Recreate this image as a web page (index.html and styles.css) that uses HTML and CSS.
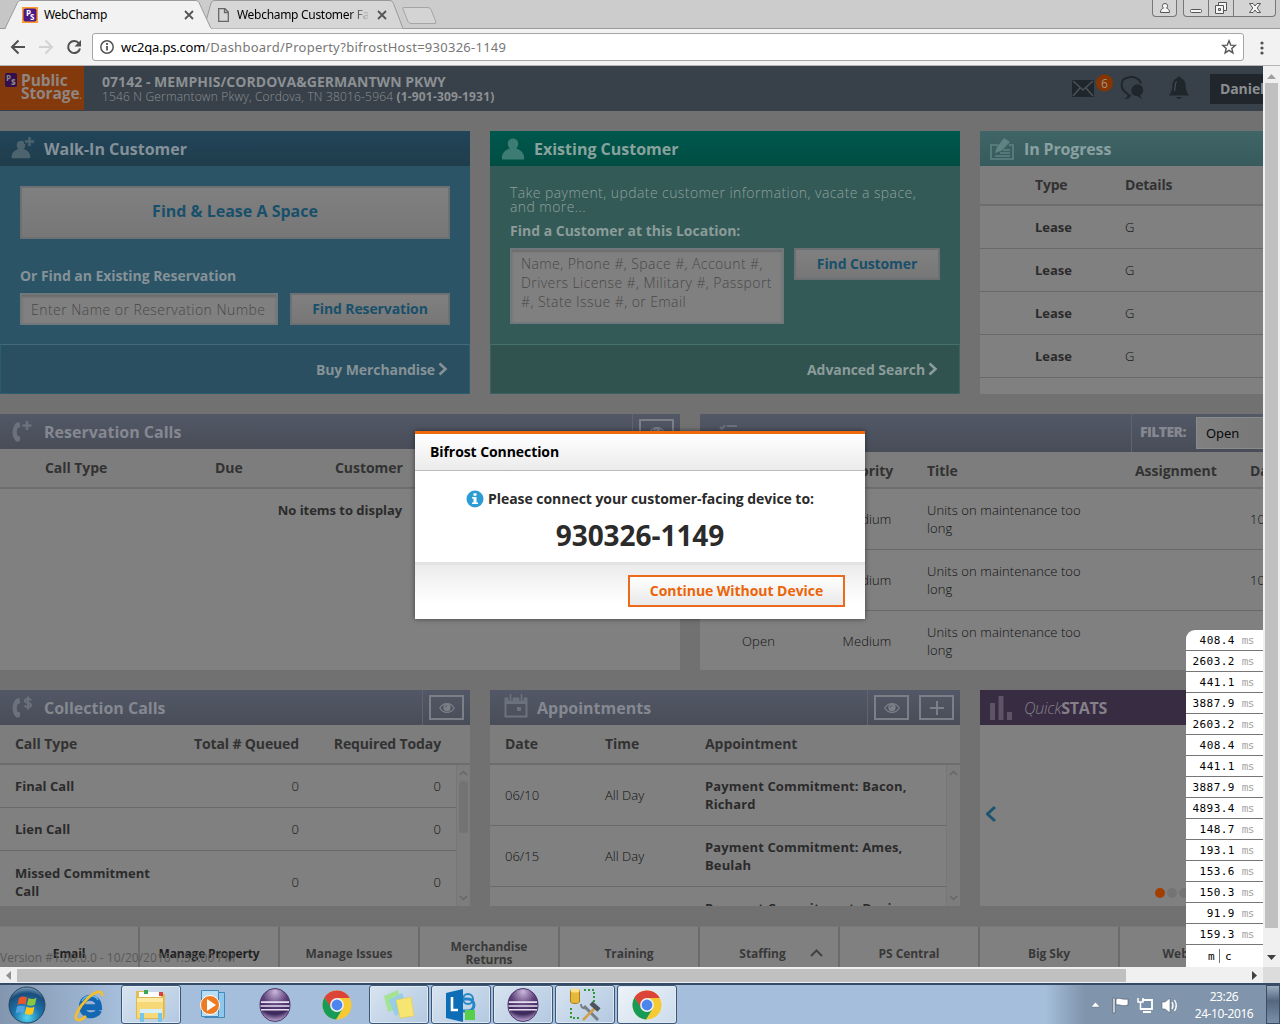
FILE: index.html
```html
<!DOCTYPE html>
<html lang="en">
<head>
<meta charset="utf-8">
<title>WebChamp</title>
<link rel="stylesheet" href="styles.css">
</head>
<body>
<svg width="0" height="0" class="defs">
  <defs>
    <symbol id="person" viewBox="0 0 24 24"><path d="M12 1.500c3.400 0 5.200 2.400 5.200 5.200 0 2-.8 3.700-2 4.800 4.200 1.300 8 4.500 8 9.500 0 1-.6 1.500-1.500 1.500H2.300C1.400 22.500.8 22 .8 21c0-5 3.800-8.200 8-9.500-1.200-1.100-2-2.800-2-4.800 0-2.800 1.800-5.200 5.200-5.200z"/></symbol>
    <symbol id="eye" viewBox="0 0 16 12"><path fill="none" stroke="currentColor" stroke-width="1.300" d="M.8 6C4 .2 12 .2 15.200 6 12 11.800 4 11.800.8 6z"/><circle cx="8" cy="5.500" r="3.700" fill="currentColor"/><path fill="none" stroke="#4b515c" stroke-width="1" d="M6.300 5.400C6.300 4.300 7 3.700 8 3.700"/></symbol>
    <symbol id="handset" viewBox="0 0 12 22"><path d="M8.500 1.300 9.300 6 6.600 7.200C5.500 9.800 5.500 12 6.600 14.800l2.700 1L8.600 20.300C6.500 20.800 5 20.600 4 19 .8 14 .8 8 4 3.200 5 1.700 6.500 1.200 8.500 1.300z"/></symbol>
    <symbol id="chev" viewBox="0 0 10 14"><path fill="none" stroke="currentColor" stroke-width="2.600" d="M1.500 1.500 7.500 7l-6 5.500"/></symbol>
    <symbol id="chrome" viewBox="0 0 30 30"><circle cx="15" cy="15" r="14.500" fill="#f7ca34"/><path fill="#dc4437" d="M15 15 2.500 7.600A14.500 14.500 0 0 1 27.700 8H15z"/><path fill="#dc4437" d="M2.500 7.600 9 19l6-11z"/><path fill="#179c58" d="M2.500 7.600A14.500 14.500 0 0 0 14 29.500l6.500-10.500-11-.8z"/><circle cx="15" cy="15" r="6.900" fill="#f1f1f1"/><circle cx="15" cy="15" r="5.400" fill="#4b86ee"/></symbol>
    <radialGradient id="purpleball" cx=".5" cy=".1" r=".9"><stop offset="0" stop-color="#c9b7db"/><stop offset=".45" stop-color="#60437c"/><stop offset=".75" stop-color="#3b2659"/><stop offset="1" stop-color="#c3aedb"/></radialGradient>
    <symbol id="eclipse" viewBox="0 0 32 36" preserveAspectRatio="none"><ellipse cx="16" cy="18" rx="15" ry="17.500" fill="url(#purpleball)" stroke="#4a3465"/><path stroke="#e6dff0" stroke-width="1.700" d="M2 15h28M1.500 19h29M2 23h28"/></symbol>
    <radialGradient id="orb" cx=".5" cy=".85" r=".9"><stop offset="0" stop-color="#54d6f0"/><stop offset=".4" stop-color="#1d76ad"/><stop offset=".75" stop-color="#1a4d7c"/><stop offset="1" stop-color="#9fb8cc"/></radialGradient>
  </defs>
</svg>

<div class="tabstrip">
  <svg class="tabshape" width="450" height="29" viewBox="0 0 450 29">
    <path fill="#c6c6c6" d="M0 0h5L18 0 5 28H0z"/>
    <path fill="#d6d6d6" stroke="#9a9a9a" d="M204 28.500 211 3q1-2 3-2.500h176q2.500 0 3.500 3L403 28.500"/>
    <path fill="#f2f2f2" stroke="#9a9a9a" d="M-1 28.500h6L17.500 2.500q1-2 3-2H196q2 0 3 2L211 28.500"/>
    <path fill="#f2f2f2" d="M6 28h205v1H6z"/>
    <path fill="#d4d4d4" stroke="#a5a5a5" d="M403 9q-1-1.500 1-1.500h24q2 0 3 2l5 12.500q.5 1.500-1 1.500h-24q-2 0-3-2z"/>
    <path stroke="#9a9a9a" d="M403 28.500h47"/>
    <path fill="#ff9a2e" d="M22 7h16v16H22z"/><rect x="23.500" y="8.500" width="13" height="13" rx="2" fill="#4c1a86"/>
    <path fill="none" stroke="#666" stroke-width="1.300" d="M218.700 8.700h6.300l3.300 3.300v9.300h-9.600zM224.500 8.700v3.800h3.800"/>
    <path stroke="#555" stroke-width="1.800" d="m185 11 8 8m0-8-8 8m193-8 8 8m0-8-8 8"/>
  </svg>
  <span class="pslogo">P</span><span class="pslogo s">S</span>
  <span class="tabname one">WebChamp</span>
  <span class="tabname two">Webchamp Customer Fa</span>
  <div class="winbtns">
    <div class="wb user"><svg width="14" height="14" viewBox="0 0 14 14"><path fill="#f5f5f5" stroke="#555" d="M7 2.500a2.500 2.500 0 0 1 1.500 4.600C10.500 7.800 11.500 9 11.500 11.500h-9C2.500 9 3.500 7.800 5.500 7.100A2.500 2.500 0 0 1 7 2.500z"/></svg></div>
    <div class="wb min"><svg width="14" height="14"><rect x="1.500" y="8.500" width="11" height="3" rx="1" fill="#f5f5f5" stroke="#555"/></svg></div>
    <div class="wb max"><svg width="14" height="14"><path fill="#f5f5f5" stroke="#555" d="M4.500 1.500h8v8h-8z"/><path fill="#f5f5f5" stroke="#555" d="M1.500 4.500h8v8h-8z"/><path fill="#ccc" stroke="#555" d="M4.500 7.500h2v2h-2z"/></svg></div>
    <div class="wb cls"><svg width="14" height="14"><path fill="#f5f5f5" stroke="#555" d="M1.500 2.500h3.500l2 2.500 2-2.500h3.500L9.200 7l3.300 4.500H9L7 9l-2 2.500H1.500L4.800 7z"/></svg></div>
  </div>
</div>

<div class="toolbar">
  <svg width="84" height="36" viewBox="0 0 84 36"><g fill="none" stroke-width="2"><path stroke="#505050" d="M25 18H12m6.500-6.500L12 18l6.500 6.500"/><path stroke="#d2d2d2" d="M39 18h13m-6.500-6.500L52 18l-6.500 6.500"/><path stroke="#505050" d="M79 14.500A6 6 0 1 0 80 19.500"/></g><path fill="#505050" d="M81 11v6.500h-6.500z"/></svg>
  <div class="omnibox">
    <svg width="16" height="16" viewBox="0 0 16 16"><circle cx="8" cy="8" r="6.200" fill="none" stroke="#555" stroke-width="1.500"/><path stroke="#555" stroke-width="1.800" d="M8 7v4.500M8 4v2"/></svg>
    <span class="host">wc2qa.ps.com</span><span class="path">/Dashboard/Property?bifrostHost=930326-1149</span>
    <svg class="star" width="16" height="16" viewBox="0 0 16 16"><path fill="none" stroke="#555" stroke-width="1.400" d="m8 1.800 1.700 4.300 4.600.3-3.500 3 1.100 4.500L8 11.400l-3.900 2.500 1.100-4.500-3.500-3 4.600-.3z"/></svg>
  </div>
  <svg width="20" height="36"><g fill="#505050"><circle cx="10" cy="14" r="1.600"/><circle cx="10" cy="19" r="1.600"/><circle cx="10" cy="24" r="1.600"/></g></svg>
</div>

<div class="browser">
<div class="viewport">
  <header class="topbar">
    <div class="brand"><span class="mark"><i>P</i><b>S</b></span><span class="brandname">Public<br>Storage<small>.</small></span></div>
    <div class="site"><div class="sitename">07142 - MEMPHIS/CORDOVA&amp;GERMANTWN PKWY</div><div class="addr">1546 N Germantown Pkwy, Cordova, TN 38016-5964 <b>(1-901-309-1931)</b></div></div>
    <svg class="topicons" width="130" height="45" viewBox="0 0 130 45">
      <path fill="#20272c" d="M8 14h22v17H8z"/><path fill="none" stroke="#4a535b" stroke-width="1.500" d="m9 15 10 9 10-9M9 30l7-8m13 8-7-8"/>
      <circle cx="40.500" cy="17" r="8.500" fill="#863500"/>
      <path fill="none" stroke="#20272c" stroke-width="2" d="M64 28c-9-5-8-15 0-16.500 6-1.500 12 1 13 6"/><path fill="#20272c" d="M60 33c3-1 4-3 3-6l4 2c0 3-3 4-7 4zM73 19c7 0 8 8 3 10l2 4-5-3c-7 0-8-10 0-11z"/><circle cx="73.500" cy="24" r="5.700" fill="#20272c"/>
      <path fill="#20272c" d="M115 10.500c1.300 0 1.800.7 1.800 1.600 4.200 1.400 4.700 5 5 9 .2 3.500 1 5.500 3.200 8.400h-20c2.200-3 3-5 3.200-8.400.3-4 .8-7.600 5-9 0-.9.500-1.600 1.800-1.600zM112 31h6q-3 4-6 0z"/><path stroke="#465059" stroke-width="1.200" fill="none" d="M110.500 25c.8-5 .4-7 2-9.500"/>
    </svg>
    <span class="badge">6</span>
    <div class="username">Daniel</div>
  </header>

  <main>
    <div class="row top3">
      <section class="card walkin">
        <h2><svg width="24" height="24"><use href="#person" y="1" width="20" height="23"/><path stroke="#22455a" stroke-width="5" d="M18.500 0v10M13 4.500h11"/><path stroke="#4d636e" stroke-width="2.400" d="M18.500 0v9M14 4.500h9"/></svg>Walk-In Customer</h2>
        <div class="body">
          <button class="btn big">Find &amp; Lease A Space</button>
          <label>Or Find an Existing Reservation</label>
          <div class="line"><div class="input">Enter Name or Reservation Numbe</div><button class="btn">Find Reservation</button></div>
        </div>
        <footer>Buy Merchandise<svg width="10" height="14"><use href="#chev"/></svg></footer>
      </section>
      <section class="card existing">
        <h2><svg width="24" height="24"><use href="#person" width="24" height="24"/></svg>Existing Customer</h2>
        <div class="body">
          <p>Take payment, update customer information, vacate a space,<br>and more...</p>
          <label>Find a Customer at this Location:</label>
          <div class="line"><div class="input area">Name, Phone #, Space #, Account #,<br>Drivers License #, Military #, Passport<br>#, State Issue #, or Email</div><button class="btn">Find Customer</button></div>
        </div>
        <footer>Advanced Search<svg width="10" height="14"><use href="#chev"/></svg></footer>
      </section>
      <section class="card progress">
        <h2><svg width="26" height="26" viewBox="0 0 26 26"><path fill="none" stroke="#5f8283" stroke-width="1.600" d="M9 9H2v14h22V9h-4M14 14h7m-10 3h10m-15 3h15"/><path fill="#5f8283" d="m15 2 6 4-9 9-6 2 2-6z"/></svg>In Progress</h2>
        <div class="tr th"><span>Type</span><span>Details</span></div>
        <div class="tr"><b>Lease</b><span>G</span></div>
        <div class="tr"><b>Lease</b><span>G</span></div>
        <div class="tr"><b>Lease</b><span>G</span></div>
        <div class="tr"><b>Lease</b><span>G</span></div>
      </section>
    </div>

    <div class="row mid2">
      <section class="card rescalls">
        <h2><svg width="24" height="24"><use href="#handset" y="1" width="12" height="22"/><path stroke="currentColor" stroke-width="2.600" d="M16 1v9M11.500 5.500h9"/></svg>Reservation Calls<span class="tools"><span class="tool"><svg width="16" height="12"><use href="#eye"/></svg></span></span></h2>
        <div class="tr th"><span>Call Type</span><span>Due</span><span>Customer</span></div>
        <div class="empty">No items to display</div>
      </section>
      <section class="card issues">
        <h2><svg width="26" height="24"><path stroke="currentColor" stroke-width="2" fill="none" d="M9 6l2 2 3-4M16 5h12M16 12h10M9 12h4"/></svg><span class="filter"><b>FILTER:</b><span class="select">Open</span></span></h2>
        <div class="tr th"><span>Status</span><span>Priority</span><span>Title</span><span>Assignment</span><span>Date</span></div>
        <div class="tr"><span>Open</span><span>Medium</span><span>Units on maintenance too<br>long</span><span></span><span>10/20</span></div>
        <div class="tr"><span>Open</span><span>Medium</span><span>Units on maintenance too<br>long</span><span></span><span>10/20</span></div>
        <div class="tr"><span>Open</span><span>Medium</span><span>Units on maintenance too<br>long</span><span></span><span></span></div>
      </section>
    </div>

    <div class="row bot3">
      <section class="card colls">
        <h2><svg width="24" height="24"><use href="#handset" y="1" width="12" height="22"/><path fill="none" stroke="currentColor" stroke-width="2" d="M20 4.500c-1-2-6-2-6 .5s6 1.500 6 4-5 3-6.500.5M17 .5v13"/></svg>Collection Calls<span class="tools"><span class="tool"><svg width="16" height="12"><use href="#eye"/></svg></span></span></h2>
        <div class="tr th"><span>Call Type</span><span>Total # Queued</span><span>Required Today</span></div>
        <div class="scroller"><div class="rows">
          <div class="tr"><b>Final Call</b><span>0</span><span>0</span></div>
          <div class="tr"><b>Lien Call</b><span>0</span><span>0</span></div>
          <div class="tr"><b>Missed Commitment<br>Call</b><span>0</span><span>0</span></div>
        </div><div class="sbar"><svg width="9" height="6"><path d="m1 5 3.500-3.500L8 5"/></svg><i class="thumb"></i><svg class="dn" width="9" height="6"><path d="m1 1 3.500 3.500L8 1"/></svg></div></div>
      </section>
      <section class="card appts">
        <h2><svg width="24" height="24" viewBox="0 0 24 24"><path fill="none" stroke="currentColor" stroke-width="2" d="M1.500 4.500h21v18h-21z"/><path fill="currentColor" d="M1 5h22v5H1zM13 13h4v4h-4z"/><path stroke="#4b515c" stroke-width="4" d="M6.500 0v7m11-7v7"/><path stroke="currentColor" stroke-width="2" d="M6.500 0v7m11-7v7"/></svg>Appointments<span class="tools"><span class="tool"><svg width="16" height="12"><use href="#eye"/></svg></span><span class="tool plus"><svg width="16" height="16"><path stroke="currentColor" stroke-width="2" d="M8 1v14M1 8h14"/></svg></span></span></h2>
        <div class="tr th"><span>Date</span><span>Time</span><span>Appointment</span></div>
        <div class="scroller"><div class="rows">
          <div class="tr"><span>06/10</span><span>All Day</span><b>Payment Commitment: Bacon,<br>Richard</b></div>
          <div class="tr"><span>06/15</span><span>All Day</span><b>Payment Commitment: Ames,<br>Beulah</b></div>
          <div class="tr"><span></span><span></span><b>Payment Commitment: Davis,<br>&nbsp;</b></div>
        </div><div class="sbar"><svg width="9" height="6"><path d="m1 5 3.500-3.500L8 5"/></svg><svg class="dn" width="9" height="6"><path d="m1 1 3.500 3.500L8 1"/></svg></div></div>
      </section>
      <section class="card stats">
        <h2><svg width="24" height="26"><path fill="#5d5466" d="M0 8h5v17H0zM8.500 1h5v24h-5zM17 17h5v8h-5z"/></svg><em>Quick</em>STATS</h2>
        <div class="carousel"><svg width="12" height="18"><path fill="none" stroke="#1e5470" stroke-width="3" d="M9 2 1.500 9 9 16"/></svg><div class="dots"><i class="on"></i><i></i><i></i></div></div>
      </section>
    </div>

    <nav>
      <a class="dark">Email</a><a class="dark">Manage Property</a><a>Manage Issues</a><a class="two">Merchandise<br>Returns</a><a>Training</a><a class="staff">Staffing<svg width="13" height="8"><path fill="none" stroke="#424242" stroke-width="2" d="m1 7 5.500-5.500L12 7"/></svg></a><a>PS Central</a><a>Big Sky</a><a>WebFiles</a>
    </nav>
  </main>

  <div class="version">Version #1.00.0.0 - 10/20/2016 1:55:00 PM</div>

  <div class="modal">
    <div class="mhead">Bifrost Connection</div>
    <div class="mbody">
      <div class="msg"><svg width="18" height="18" viewBox="0 0 18 18"><circle cx="9" cy="9" r="8.500" fill="#2d9bd4"/><path fill="#fff" d="M7.500 3.300h3v2.500h-3zM6 7h4.500v5.500H12V14H6v-1.500h1.500v-4H6z"/></svg>Please connect your customer-facing device to:</div>
      <div class="code">930326-1149</div>
    </div>
    <div class="mfoot"><button>Continue Without Device</button></div>
  </div>

  <div class="profiler">
    <div>408.4 <i>ms</i></div><div>2603.2 <i>ms</i></div><div>441.1 <i>ms</i></div><div>3887.9 <i>ms</i></div><div>2603.2 <i>ms</i></div><div>408.4 <i>ms</i></div><div>441.1 <i>ms</i></div><div>3887.9 <i>ms</i></div><div>4893.4 <i>ms</i></div><div>148.7 <i>ms</i></div><div>193.1 <i>ms</i></div><div>153.6 <i>ms</i></div><div>150.3 <i>ms</i></div><div>91.9 <i>ms</i></div><div>159.3 <i>ms</i></div>
    <div class="mc"><span>m</span><span>c</span></div>
  </div>
</div>
<div class="vscroll"><svg width="9" height="5"><path fill="#a0a0a0" d="M0 5 4.500 0 9 5z"/></svg><i></i><svg width="9" height="5"><path fill="#404040" d="M0 0h9L4.500 5z"/></svg></div>
<div class="hscroll"><svg width="17" height="9"><path fill="#909090" d="M11 0v9L6 4.500z"/></svg><i></i><svg width="17" height="9"><path fill="#404040" d="M6 0v9l5-4.500z"/></svg></div>
<div class="corner"></div>
</div>

<div class="taskbar">
  <div class="slot start"><svg width="38" height="38" viewBox="0 0 38 38"><circle cx="19" cy="19" r="18" fill="url(#orb)" stroke="#2b4661"/><path fill="#e8562a" d="M11 12q4-2.500 8-.5l-1.500 7q-4-1.500-8 .5z"/><path fill="#8cc63f" d="M20.500 12q4 2 8-.3l-1.600 7q-4 2-8 0z"/><path fill="#4fa3e0" d="M9 20.500q4-2 8-.3l-1.500 7q-4-2-8 .3z"/><path fill="#fdc51b" d="M18.500 20.700q4 2 8 0l-1.600 7q-4 2-8-.3z"/></svg></div>
  <div class="slot"><svg width="32" height="36" viewBox="0 0 32 36"><path fill="none" stroke="#1468b3" stroke-width="6" d="M26 23.500c-3 7-17 7-17-4.500s16.500-11 17 1.200H10"/><path fill="none" stroke="#5ab7ec" stroke-width="1.500" d="M9 14c3-6 13-7 16-1"/><path fill="none" stroke="#f4bf2a" stroke-width="2.600" d="M29 9c1-7-7-5-15 3S-1 32 5 33c3 .5 6-2 8-4"/></svg></div>
  <div class="slot open"><svg width="34" height="36" viewBox="0 0 34 36"><path fill="#e2bd55" d="M2 4h10l2 3h17v23H2z"/><path fill="#fff" d="M5 5h22v5H5z"/><path fill="#36a852" d="M10 3h4v4h-4z"/><path fill="#d9403a" d="M25 5h4v4h-4z"/><path fill="#fbe9a4" stroke="#dcb954" d="M2.500 10.500h27v21h-27z"/><path fill="#f6d877" d="M3 15h26v16H3z"/><path fill="none" stroke="#77c6ea" stroke-width="4" d="M8 35V24h18v11"/><path fill="#d5f0fb" d="M6 22h22v4H6z"/></svg></div>
  <div class="slot"><svg width="30" height="32" viewBox="0 0 30 32"><path fill="#8fc8ea" stroke="#4489bc" d="M6.500 3.500h20v25h-20z"/><path fill="#b9def3" stroke="#4489bc" d="M3.500 1.500h17v26h-17z"/><circle cx="12" cy="16" r="9.500" fill="#ee7a22" stroke="#fff"/><path fill="#fff" d="m9 10 9 6-9 6z"/></svg></div>
  <div class="slot"><svg width="32" height="34"><use href="#eclipse" width="32" height="34"/></svg></div>
  <div class="slot"><svg width="30" height="36"><use href="#chrome" width="30" height="36"/></svg></div>
  <div class="slot open"><svg width="34" height="34" viewBox="0 0 34 34"><path fill="#a5e392" d="m2 8 14-6 4 17-14 5z"/><path fill="#95cdea" d="m7 12 13-7 6 16-13 7z"/><path fill="#f7e572" stroke="#e0c84e" stroke-width=".6" d="m14 12 15-3 3 19-14 2z"/></svg></div>
  <div class="slot open"><svg width="34" height="36" viewBox="0 0 34 36"><path fill="none" stroke="#2586c8" stroke-width="3" d="M19 12h5a6 6 0 0 1 0 12h-5"/><circle cx="24" cy="12" r="5" fill="none" stroke="#2586c8" stroke-width="2"/><path fill="#0e6db7" d="m2 6 17-4v33L2 31z"/><path fill="none" stroke="#fff" stroke-width="2.600" d="M8 10v13h6"/><path fill="#57cf4a" d="M21 23h10v10H21z"/></svg></div>
  <div class="slot open"><svg width="32" height="34"><use href="#eclipse" width="32" height="34"/></svg></div>
  <div class="slot open"><svg width="34" height="36" viewBox="0 0 34 36"><path fill="#e7b93a" stroke="#a87f1c" d="M2.500 3v12c2 2 7 2 9 0V3z"/><ellipse cx="7" cy="3.500" rx="4.500" ry="2" fill="#fae18b"/><path fill="none" stroke="#2e9a35" stroke-width="2" stroke-dasharray="2 2" d="M16 3h10v12M3 21v10h10"/><path stroke="#777f87" stroke-width="3" d="m16 19 14 14"/><path fill="none" stroke="#777f87" stroke-width="2" d="M13 17q0 5 5 4"/><path stroke="#d2a04c" stroke-width="2.600" d="M27 21 15 33"/><path stroke="#4c555c" stroke-width="4.500" d="m23 16 8 7"/></svg></div>
  <div class="slot open bright"><svg width="30" height="36"><use href="#chrome" width="30" height="36"/></svg></div>
  <div class="tray">
    <svg class="trayicons" width="100" height="24" viewBox="0 0 100 24"><path fill="#fff" stroke="#5d6f85" stroke-width=".5" d="m12 14 4.500-5 4.500 5z"/><path fill="#fff" stroke="#3f4f63" stroke-width=".6" d="M34 5h2v15h-2zM37 6c4-2 5 1 12 0v6c-6 2-8-1-12 0z"/><path fill="#7890ab" stroke="#fff" stroke-width="1.800" d="M63 7h10v9H61M64 19h8"/><path fill="none" stroke="#fff" stroke-width="1.500" d="M59 5v4h5V5m-2.500 4v7H66"/><path fill="#fff" stroke="#3f4f63" stroke-width=".5" d="M83 9h3l5-4v15l-5-4h-3z"/><path fill="none" stroke="#fff" stroke-width="1.300" d="M93 9q2 3.500 0 7m2.500-9q3.500 5.500 0 11"/></svg>
    <div class="clock">23:26<br>24-10-2016</div>
    <div class="peek"></div>
  </div>
</div>
</body>
</html>
```
FILE: styles.css
```css
* { box-sizing: border-box; }
body { margin: 0; width: 1280px; height: 1024px; overflow: hidden; display: flex; flex-direction: column; font-family: "Open Sans", sans-serif; }
.defs { position: absolute; }
i { font-style: normal; }

/* browser frame */
.tabstrip { height: 29px; background: #ccc; border-bottom: 1px solid #9a9a9a; position: relative; font-family: "Noto Sans", sans-serif; }
.tabshape { display: block; }
.tabname { position: absolute; top: 6px; font-size: 12px; line-height: 17px; color: #000; letter-spacing: -.3px; white-space: nowrap; }
.tabname.one { left: 44px; }
.tabname.two { left: 237px; width: 131px; overflow: hidden; -webkit-mask: linear-gradient(90deg, #000 112px, transparent 133px); }
.pslogo { position: absolute; left: 26px; top: 9px; font: bold 8px/8px "Open Sans", sans-serif; color: #fff; }
.pslogo.s { left: 30px; top: 13px; }
.winbtns { position: absolute; right: 4px; top: 0; height: 17px; display: flex; }
.wb { border: 1px solid #777; border-top: 0; border-left-width: 0; background: #d4d4d4; display: flex; justify-content: center; align-items: center; }
.wb.user { width: 25px; border-left-width: 1px; border-radius: 0 0 4px 4px; margin-right: 6px; }
.wb.min { width: 26px; border-left-width: 1px; border-radius: 0 0 0 4px; }
.wb.max { width: 25px; }
.wb.cls { width: 42px; border-radius: 0 0 4px 0; }
.toolbar { height: 37px; background: #f2f2f2; border-bottom: 1px solid #b5b5b5; display: flex; align-items: center; gap: 8px; }
.omnibox { width: 1152px; height: 28px; border: 1px solid #a6a6a6; border-radius: 3px; background: #fff; display: flex; align-items: center; padding: 0 6px; font: 13px "Noto Sans", sans-serif; }
.omnibox .host { margin-left: 6px; letter-spacing: -.2px; color: #000; }
.omnibox .path { color: #777; letter-spacing: .26px; }
.omnibox .star { margin-left: auto; }

.browser { height: 917px; display: grid; grid-template: 901px 16px / 1263px 17px; }
.viewport { position: relative; overflow: hidden; background: #717171; }
.vscroll { background: #f0f0f0; display: flex; flex-direction: column; align-items: center; padding-top: 8px; }
.vscroll i { width: 13px; margin: 4px 0 27px; height: 845px; background: #c0c0c0; }
.hscroll { background: #f0f0f0; display: flex; align-items: center; padding-top: 1px; }
.hscroll i { width: 1109px; height: 13px; background: #c0c0c0; margin-right: 120px; }
.corner { background: #dcdcdc; }

/* dashboard */
.topbar { height: 45px; background: #384149; display: flex; align-items: center; }
.topbar > * { flex: none; }
.brand { width: 84px; height: 44px; background: #84390d; position: relative; align-self: flex-start; color: #8f8581; }
.mark { position: absolute; left: 5px; top: 7px; width: 12px; height: 14px; border-radius: 2px; background: #321050; font-size: 8px; line-height: 8px; font-weight: 700; }
.mark i { position: absolute; left: 1px; top: 1px; }
.mark b { position: absolute; left: 6px; top: 5px; }
.brandname { position: absolute; left: 21px; top: 8px; font: 700 15.500px/13px "Open Sans", sans-serif; letter-spacing: -.1px; }
.brandname small { font-size: 8px; }
.site { margin-left: 18px; color: #8c9094; width: 880px; }
.sitename { font-weight: 700; font-size: 14px; line-height: 17px; letter-spacing: .04px; }
.addr { font-size: 12px; line-height: 14px; font-weight: 300; letter-spacing: .17px; }
.addr b { font-weight: 700; }
.topicons { margin-left: 82px; }
.badge { position: absolute; left: 1101px; top: 10px; font-size: 12px; line-height: 15px; color: #a39488; }
.username { margin-left: 16px; width: 100px; height: 30px; background: #20262b; color: #8c8f92; font-size: 14px; line-height: 30px; font-weight: 700; padding-left: 10px; letter-spacing: -.1px; }
main { width: 1450px; padding-top: 20px; }
.row { display: grid; column-gap: 20px; margin-bottom: 20px; }
.top3, .bot3 { grid-template-columns: 470px 470px 470px; }
.top3 { grid-template-rows: 263px; }
.mid2 { grid-template: 256px / 680px 750px; }
.bot3 { grid-template-rows: 216px; }
.card { background: #808080; overflow: hidden; display: flex; flex-direction: column; color: #2b2b2b; }
h2 { margin: 0; flex: none; height: 35px; font-size: 16px; font-weight: 700; line-height: 36px; background: linear-gradient(#525866, #484d58); color: #858890; display: flex; align-items: center; }
h2 > svg { margin: 0 9px 0 11px; fill: #6c727d; color: #6c727d; }
.walkin h2 { background: linear-gradient(#22455a, #1f3d4b); color: #84919a; }
.walkin h2 > svg { fill: #4d636e; }
.existing h2 { background: linear-gradient(#00584d, #004d43); color: #8aa29d; }
.existing h2 > svg { fill: #3d7c73; margin-right: 9px; }
.progress h2 { background: linear-gradient(#406567, #375b5d); color: #8ba0a1; letter-spacing: -.15px; }
.progress h2 > svg { margin: 0 9px 0 9px; }
.stats h2 { background: #372c42; color: #858089; letter-spacing: -.3px; }
.stats h2 > svg { margin: 0 10px 0 10px; }
.stats em { font-weight: 300; }
.walkin { background: #2b5467; }
.existing { background: #335a57; }
.body { flex: 1; padding: 20px 20px 0; }
.btn { border: 2px solid #6c7073; background: linear-gradient(#808080, #777); color: #18506b; font: 700 14px "Open Sans", sans-serif; padding: 0 0 2px; height: 32px; letter-spacing: -.12px; }
.btn.big { display: block; width: 430px; height: 53px; font-size: 16px; letter-spacing: 0; padding-bottom: 3px; }
label { display: block; font-weight: 700; font-size: 14px; color: #869297; letter-spacing: -.06px; line-height: 20px; }
.walkin label { margin: 27px 0 7px; }
.line { display: flex; justify-content: space-between; align-items: flex-start; }
.input { width: 258px; height: 32px; background: #808080; border: 2px solid #71787b; box-shadow: inset 0 2px 2px #6c6c6c; color: #484848; font-weight: 300; font-size: 14px; letter-spacing: .46px; line-height: 30px; padding-left: 9px; overflow: hidden; white-space: nowrap; }
.walkin .btn:not(.big) { width: 160px; }
.existing .btn { width: 146px; }
.input.area { width: 274px; height: 76px; line-height: 19px; padding-top: 4px; letter-spacing: .41px; }
.existing p { margin: 0 0 7px; font-weight: 300; font-size: 14px; line-height: 14px; letter-spacing: .43px; color: #8fa09e; white-space: nowrap; }
.existing label { margin-bottom: 7px; letter-spacing: 0; color: #8c9c9a; }
.card footer { flex: none; height: 50px; border: 1px solid; border-color: #426b7a #2b5c71 #2b5c71; background: #294f61; color: #869297; font-weight: 700; font-size: 14px; letter-spacing: -.09px; display: flex; align-items: center; justify-content: flex-end; padding-right: 21px; gap: 3px; }
.existing footer { background: #30534f; border-color: #46706a #3a625f #3a625f; color: #8c9c9a; }

.tr { display: grid; align-items: center; font-size: 13px; line-height: 18px; letter-spacing: .1px; border-bottom: 1px solid #696969; flex: none; height: 43px; }
.tr > span { font-weight: 300; white-space: nowrap; color: #101010; }
.tr > b { white-space: nowrap; }
.tr.th { height: 40px; border-bottom: 2px solid #6d6d6d; background: #7d7d7d; font-size: 14px; letter-spacing: -.05px; }
.tr.th > span { font-weight: 700; color: #323232; }
.progress .tr { grid-template-columns: 90px 200px; padding-left: 55px; }
.progress .tr > b { letter-spacing: -.05px; }
.progress .th { letter-spacing: -.2px; }
.rescalls .tr { grid-template-columns: 170px 120px 120px; padding-left: 45px; }
.empty { text-align: center; font-weight: 700; font-size: 13px; letter-spacing: -.03px; margin-top: 12px; line-height: 18px; }
.tools { margin-left: auto; align-self: stretch; border-left: 1px solid #5f6570; display: flex; align-items: center; gap: 10px; padding: 0 6px; }
.tool { width: 35px; height: 25px; border: 2px solid #7b7f88; color: #7b7f88; display: flex; align-items: center; justify-content: center; }
.issues h2 { height: 38px; }
.filter { margin-left: auto; width: 319px; align-self: stretch; border-left: 1px solid #5f6570; display: flex; font-size: 14px; color: #858890; padding: 3px 0 0 8px; }
.filter b { line-height: 29px; letter-spacing: -.6px; width: 56px; }
.select { width: 100px; height: 32px; background: linear-gradient(90deg, #808080, #747474); border: 1px solid #8a8a8a; color: #0a0a0a; font: 13px/31px "Noto Sans", sans-serif; letter-spacing: -.05px; padding-left: 9px; }
.issues .tr { grid-template-columns: 117px 110px 208px 115px 100px; height: 61px; }
.issues .tr > :nth-child(-n+2) { text-align: center; }
.issues .tr > :nth-child(2) { padding-right: 10px; }
.issues .tr.th { height: 37px; padding-top: 2px; }
.scroller { flex: 1; min-height: 0; display: flex; }
.rows { flex: 1; overflow: hidden; }
.sbar { width: 14px; border-left: 1px solid #777; background: #7d7d7d; display: flex; flex-direction: column; align-items: center; padding: 5px 0; }
.sbar svg { fill: none; stroke: #666; stroke-width: 1.500; flex: none; }
.sbar .thumb { width: 9px; height: 52px; border-radius: 4px; background: #737373; margin-top: 5px; }
.sbar .dn { margin-top: auto; }
.colls .tr { grid-template-columns: 155px 129px 142px; padding-left: 15px; }
.colls .tr > :nth-child(n+2) { text-align: right; }
.colls .rows .tr { letter-spacing: .02px; }
.colls .rows .tr:nth-child(3) { height: 61px; border: 0; }
.colls .th > :nth-child(2), .colls .th > :nth-child(3) { letter-spacing: -.13px; }
.appts .tr { grid-template-columns: 100px 100px 250px; padding-left: 15px; }
.appts .rows .tr { height: 61px; }
.appts .rows .tr > span { letter-spacing: 0; }
.appts .rows .tr > b { letter-spacing: .13px; }
.appts h2 > svg { margin: 0 9px 4px 14px; }
.carousel { flex: 1; position: relative; padding: 80px 0 0 6px; }
.dots { position: absolute; left: 175px; top: 163px; display: flex; gap: 2px; }
.dots i { width: 10px; height: 10px; border-radius: 5px; background: #747474; }
.dots i.on { background: #a13e00; }

nav { display: grid; grid-template-columns: repeat(9, 140px); height: 53px; width: 1260px; }
nav a { background: #808080; border-right: 2px solid #6b6b6b; border-top: 1px solid #777; font-size: 12px; font-weight: 700; line-height: 13px; color: #393939; display: flex; align-items: center; justify-content: center; text-align: center; letter-spacing: -.05px; }
nav a.dark { color: #1f1f1f; letter-spacing: -.15px; }
nav .staff { gap: 24px; padding-left: 24px; }
.version { position: absolute; left: 0; top: 884px; font-size: 12px; line-height: 16px; color: #595959; }

/* dialog */
.modal { position: absolute; left: 415px; top: 365px; width: 450px; height: 188px; background: #fff; border-top: 3px solid #f0690a; box-shadow: 0 0 5px rgba(0,0,0,.5); display: flex; flex-direction: column; color: #2b2b2b; }
.mhead { height: 37px; border-bottom: 1px solid #bbb; background: linear-gradient(#fff, #ebebeb); color: #000; font-size: 14px; font-weight: 700; letter-spacing: -.08px; line-height: 36px; padding-left: 15px; }
.mbody { flex: 1; text-align: center; }
.msg { display: flex; justify-content: center; align-items: center; gap: 4px; height: 20px; margin-top: 17px; font-size: 14px; font-weight: 700; letter-spacing: -.05px; }
.msg svg { position: relative; top: 1px; }
.code { font-size: 28px; font-weight: 700; line-height: 36px; letter-spacing: -.05px; margin-top: 9px; }
.mfoot { height: 57px; border-top: 3px solid #e3e3e3; background: linear-gradient(#ebebeb, #fff 70%); padding: 10px 20px; text-align: right; }
.mfoot button { width: 217px; height: 32px; border: 2px solid #ec6a1c; background: linear-gradient(#fff, #e9e9e9); color: #ec6408; font: 700 14px "Open Sans", sans-serif; letter-spacing: -.05px; padding: 0 0 2px; }

.profiler { position: absolute; left: 1186px; top: 564px; width: 77px; height: 337px; background: #fff; border-radius: 9px 0 0 0; overflow: hidden; font: 11px/21px "DejaVu Sans Mono", monospace; color: #000; text-align: right; }
.profiler div { height: 21px; border-bottom: 1px solid #777; padding-right: 9px; letter-spacing: .4px; white-space: nowrap; }
.profiler i { color: #a5a5a5; letter-spacing: -.5px; }
.profiler .mc { border: 0; display: flex; justify-content: center; padding: 4px 9px 0 0; line-height: 15px; }
.mc span + span { border-left: 1px solid #777; margin-left: 4px; padding-left: 5px; height: 14px; }

/* taskbar */
.taskbar { height: 41px; background: linear-gradient(90deg, #8396af 0, #a5bedb 120px, #a5bedb 1045px, #8094ab 1085px, #8094ab); border-top: 2px solid #344a66; display: flex; }
.slot { width: 62px; display: flex; align-items: center; justify-content: center; }
.slot.start { width: 58px; padding-right: 4px; }
.slot.open { border: 1px solid #3c5675; border-radius: 3px; background: linear-gradient(135deg, #d7e3f0, #b3c9e1); box-shadow: inset 0 0 0 1px #dfe9f4; width: 60px; margin: 0 1px; }
.slot.bright { background: linear-gradient(135deg, #edf3f9, #ccdcec); }
.tray { margin-left: auto; display: flex; align-items: center; }
.trayicons { margin-right: 6px; }
.clock { color: #fff; font: 12px/17px "Noto Sans", sans-serif; letter-spacing: -.4px; text-align: center; width: 78px; }
.peek { width: 14px; align-self: stretch; margin-left: 3px; border: 1px solid #3b4d63; background: linear-gradient(#9aabbf, #53677f 40%, #7b91aa); }
```
